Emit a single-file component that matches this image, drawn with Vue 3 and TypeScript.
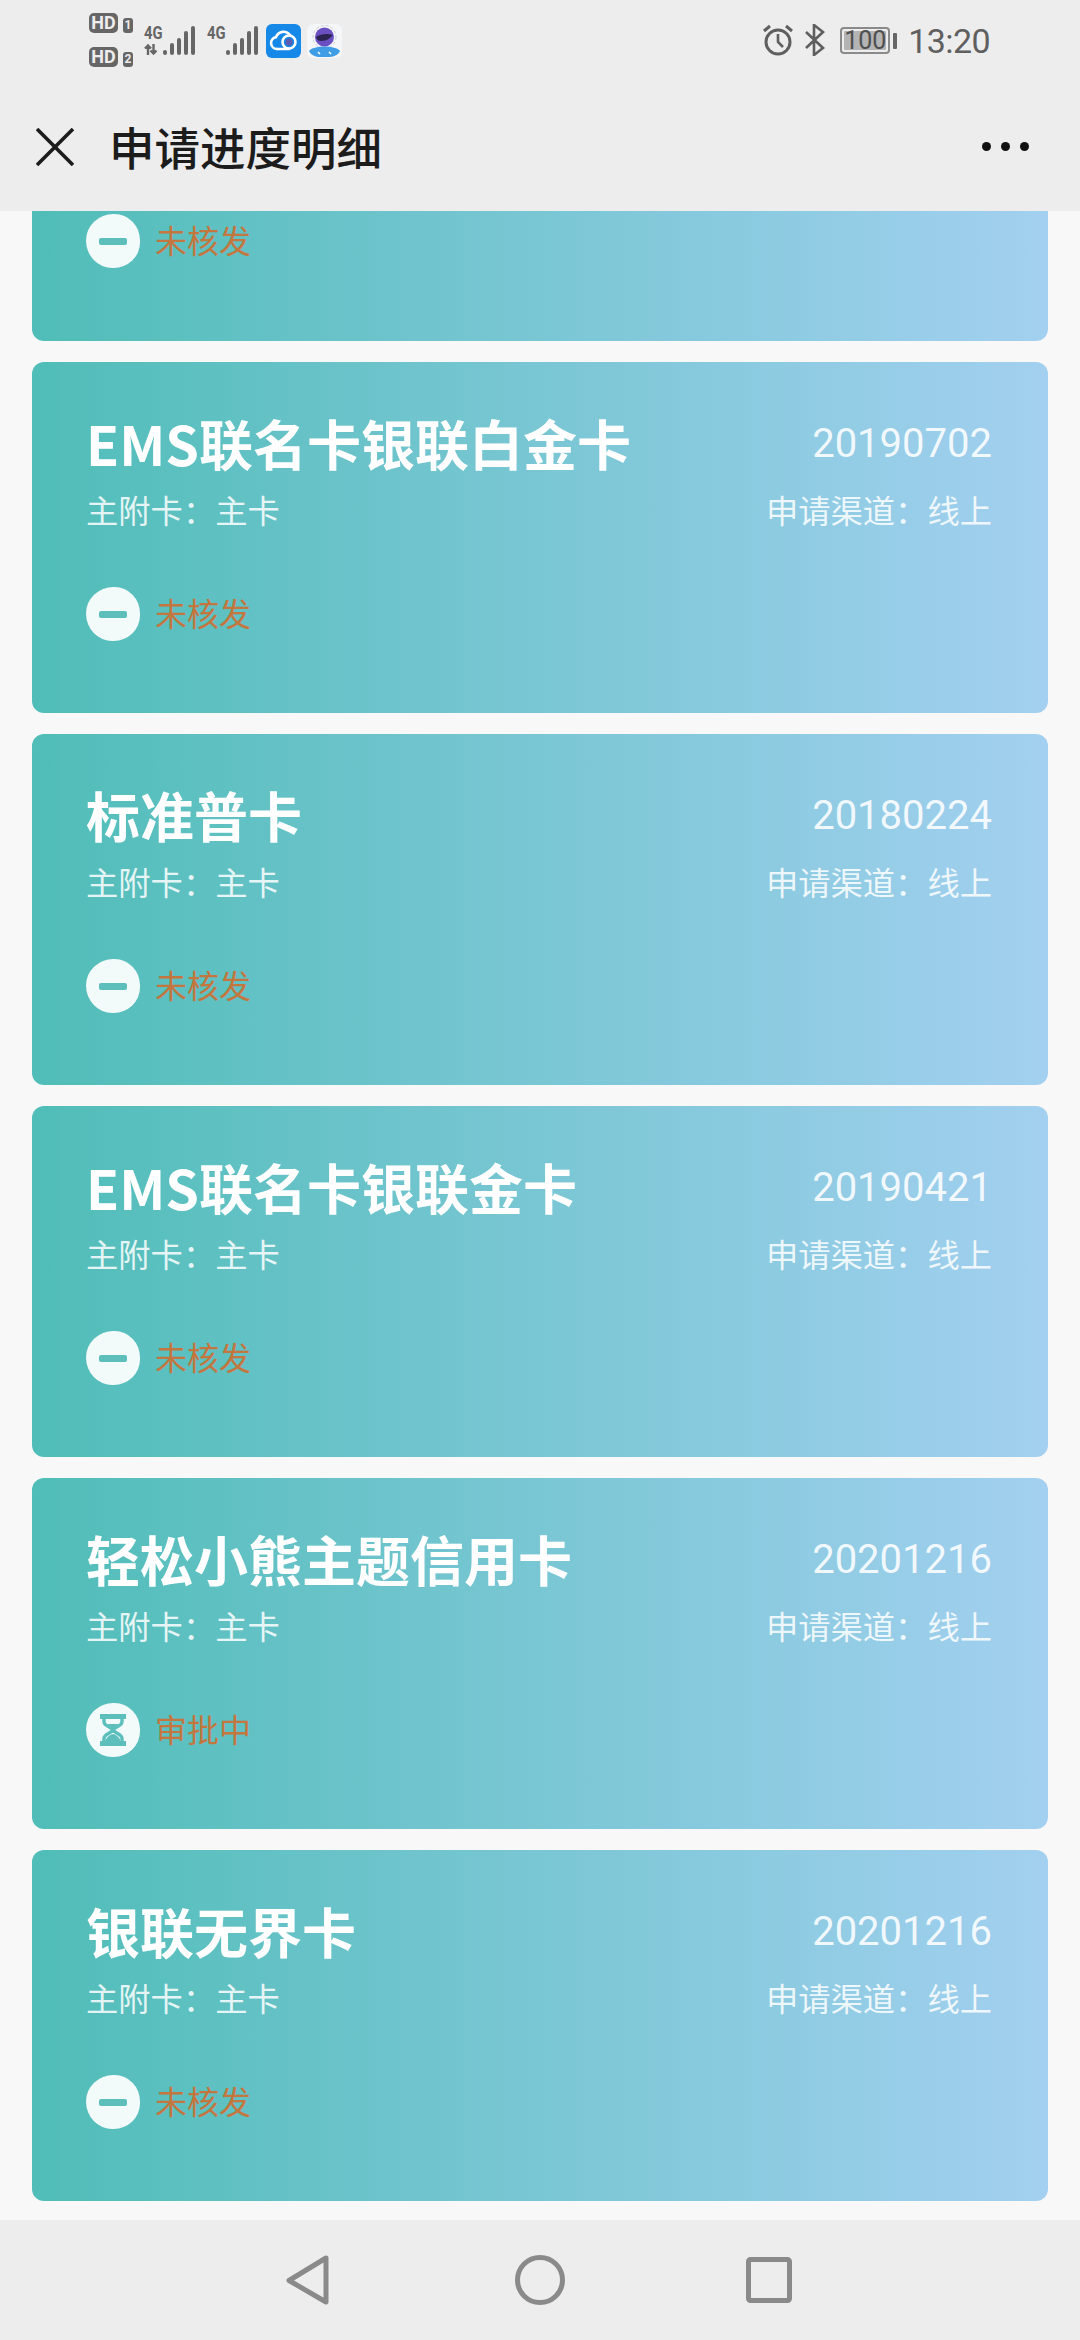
<script setup lang="ts">
interface CardItem {
  name: string
  date: string
  status: string
  pending: boolean
}
const cards: CardItem[] = [
  { name: 'EMS联名卡银联白金卡', date: '20190702', status: '未核发', pending: false },
  { name: '标准普卡', date: '20180224', status: '未核发', pending: false },
  { name: 'EMS联名卡银联金卡', date: '20190421', status: '未核发', pending: false },
  { name: '轻松小熊主题信用卡', date: '20201216', status: '审批中', pending: true },
  { name: '银联无界卡', date: '20201216', status: '未核发', pending: false },
]
const bars = [5, 12, 17, 24, 29]
</script>

<template>
  <div class="screen">
    <header class="top">
      <div class="status">
        <div class="hd-col">
          <div class="hd-row"><span class="hd">HD</span><span class="sim">1</span></div>
          <div class="hd-row"><span class="hd">HD</span><span class="sim">2</span></div>
        </div>
        <div class="net first">
          <div class="net-labels">
            <span>4G</span>
            <svg width="13" height="11" viewBox="0 0 13 11" fill="none" stroke="#666" stroke-width="2.400">
              <path d="M4 11V2M1 4.500L4 1.500L7 4.500M9.500 0v9M6.500 6.500L9.500 9.500L12.500 6.500" />
            </svg>
          </div>
          <div class="bars"><i v-for="h in bars" :key="h" :style="{ height: h + 'px' }"></i></div>
        </div>
        <div class="net second">
          <div class="net-labels"><span>4G</span></div>
          <div class="bars"><i v-for="h in bars" :key="h" :style="{ height: h + 'px' }"></i></div>
        </div>
        <svg class="app-icon cloud" width="35" height="34" viewBox="0 0 35 34">
          <rect width="35" height="34" rx="6" fill="#1588e8" />
          <path d="M11 25a6 6 0 0 1-1-11.900a8 8 0 0 1 14-2" fill="none" stroke="#fff" stroke-width="2.600" stroke-linecap="round" />
          <path d="M11 25h12" fill="none" stroke="#fff" stroke-width="2.600" stroke-linecap="round" />
          <circle cx="23" cy="18" r="6.500" fill="none" stroke="#fff" stroke-width="2.600" />
          <circle cx="23" cy="18" r="3.500" fill="#5b5bb0" />
        </svg>
        <svg class="app-icon avatar" width="35" height="34" viewBox="0 0 35 34">
          <rect width="35" height="34" rx="6" fill="#f4f6f8" />
          <circle cx="17.500" cy="13" r="11.500" fill="none" stroke="#c9cdd6" stroke-width="1" stroke-dasharray="3 2" />
          <path d="M2 27c4-6 27-6 31 0c-2 4-6 6-13 6h-6c-6 0-10-2-12-6z" fill="#3f9de6" />
          <circle cx="17.500" cy="13" r="9.500" fill="#6a4fc0" />
          <path d="M9 13c4-3 12-4 17-2c-3 3-6 6-12 6c-2 0-4-1-5-4z" fill="#2b2350" />
          <path d="M11 28l2 2M22 28l2 2" stroke="#fff" stroke-width="1.500" />
        </svg>
        <div class="spacer"></div>
        <svg class="alarm" width="32" height="32" viewBox="0 0 32 32" fill="none" stroke="#5f5f5f">
          <circle cx="16" cy="18" r="12" stroke-width="3" />
          <path d="M16 10v8l5 5" stroke-width="2.600" />
          <path d="M2 7l6-5M30 7l-6-5" stroke-width="3" />
        </svg>
        <svg class="bt" width="21" height="32" viewBox="0 0 21 32" fill="none" stroke="#5f5f5f" stroke-width="2.600">
          <path d="M2 8l17 16l-9 7V1l9 7L2 24" />
        </svg>
        <div class="battery">
          <div class="cell"><div class="fill"></div><span>100</span></div>
          <div class="tip"></div>
        </div>
        <span class="clock">13:20</span>
      </div>
      <div class="title-bar">
        <svg class="close" width="38" height="38" viewBox="0 0 38 38">
          <path d="M1 1l36 36M37 1L1 37" stroke="#1c1c1c" stroke-width="3.600" fill="none" />
        </svg>
        <h1>申请进度明细</h1>
        <div class="dots"><i></i><i></i><i></i></div>
      </div>
    </header>

    <main class="list">
      <section class="card card-tail">
        <div class="state">
          <span class="badge"><i class="minus"></i></span>
          <span class="state-text">未核发</span>
        </div>
      </section>
      <section v-for="c in cards" :key="c.name" class="card">
        <div class="row head">
          <span class="name">{{ c.name }}</span>
          <span class="date">{{ c.date }}</span>
        </div>
        <div class="row sub">
          <span>主附卡：主卡</span>
          <span>申请渠道：线上</span>
        </div>
        <div class="state">
          <span class="badge">
            <svg v-if="c.pending" width="28" height="32" viewBox="0 0 28 32" fill="none" stroke="#5cbfbc">
              <path d="M1 2.500h26M1 29.500h26" stroke-width="5" />
              <path d="M5 3v5c0 4 9 6 9 8s-9 4-9 8v5M23 3v5c0 4-9 6-9 8s9 4 9 8v5" stroke-width="3.400" />
              <path d="M8 10h12l-6 4zM6 28c1-5 6-8 8-8s7 3 8 8z" fill="#5cbfbc" stroke="none" />
            </svg>
            <i v-else class="minus"></i>
          </span>
          <span class="state-text">{{ c.status }}</span>
        </div>
      </section>
    </main>

    <nav class="nav">
      <svg width="44" height="50" viewBox="0 0 44 50" fill="none" stroke="#8a8a8a" stroke-width="5" stroke-linejoin="round">
        <path d="M40 3L3 25.500L40 47z" />
      </svg>
      <svg class="home" width="50" height="50" viewBox="0 0 50 50" fill="none" stroke="#8a8a8a" stroke-width="5">
        <circle cx="25" cy="25" r="22.500" />
      </svg>
      <svg width="46" height="46" viewBox="0 0 46 46" fill="none" stroke="#8a8a8a" stroke-width="5" stroke-linejoin="round">
        <rect x="2.500" y="2.500" width="41" height="41" rx="2" />
      </svg>
    </nav>
  </div>
</template>

<style>
html, body { margin: 0; padding: 0; background: #f8f8f8; }
</style>

<style scoped>
.screen {
  width: 1080px;
  height: 2340px;
  display: flex;
  flex-direction: column;
  background: #f8f8f8;
  overflow: hidden;
  font-family: "Noto Sans CJK SC", "Noto Sans", sans-serif;
}
.top { height: 211px; background: #ededed; flex: none; display: flex; flex-direction: column; }
.status {
  height: 70px;
  flex: none;
  display: flex;
  align-items: flex-start;
  padding: 0 90px 0 89px;
  box-sizing: border-box;
  color: #5f5f5f;
  font-family: Roboto, sans-serif;
}
.hd-col { display: flex; flex-direction: column; gap: 14px; padding-top: 13px; }
.hd-row { display: flex; align-items: flex-end; gap: 5px; height: 20px; }
.hd {
  width: 29px;
  height: 20px;
  border-radius: 5px;
  background: #666;
  color: #ededed;
  font: 700 18px/20px Roboto, sans-serif;
  text-align: center;
}
.sim {
  width: 10px;
  height: 15px;
  border-radius: 3px;
  background: #666;
  color: #ededed;
  font: 700 12px/15px Roboto, sans-serif;
  text-align: center;
}
.net { display: flex; align-items: flex-end; height: 30px; margin-top: 25px; }
.net.first { margin-left: 11px; }
.net.second { margin-left: 12px; }
.net-labels {
  display: flex;
  flex-direction: column;
  gap: 4px;
  align-self: flex-start;
  width: 19px;
  font: 700 18px/15px Roboto, sans-serif;
  color: #666;
}
.net-labels span { display: block; width: 19px; white-space: nowrap; transform: scaleX(.82); transform-origin: left; }
.bars { display: flex; align-items: flex-end; gap: 3px; height: 30px; }
.bars i { width: 4px; background: #666; border-radius: 2px; display: block; }
.app-icon { margin-top: 24px; flex: none; }
.cloud { margin-left: 8px; }
.avatar { margin-left: 6px; }
.spacer { flex: 1; }
.alarm { margin-top: 24px; flex: none; }
.bt { margin: 24px 0 0 10px; flex: none; }
.battery { display: flex; align-items: center; margin: 27px 0 0 15px; height: 27px; gap: 3px; }
.cell {
  position: relative;
  width: 50px;
  height: 27px;
  box-sizing: border-box;
  border: 2px solid #8a8a8a;
  border-radius: 4px;
  text-align: center;
  font: 400 25px/23px Roboto, sans-serif;
  color: #4f4f4f;
}
.cell span { position: relative; }
.fill { position: absolute; left: 2px; top: 2px; bottom: 2px; right: 2px; background: #b4b4b4; border-radius: 1px; }
.tip { width: 4px; height: 16px; background: #666; border-radius: 1px; }
.clock { font-size: 34px; line-height: 42px; margin: 20px 0 0 11px; letter-spacing: -.6px; }
.title-bar { flex: 1; display: flex; align-items: center; padding: 16px 51px 0 36px; }
.close { flex: none; margin-top: -4px; }
.title-bar h1 {
  margin: -6px 0 0 35px;
  font-size: 45.500px;
  line-height: 60px;
  font-weight: 500;
  color: #1c1c1c;
  flex: 1;
}
.dots { display: flex; gap: 10px; margin-top: -4px; }
.dots i { width: 9px; height: 9px; border-radius: 50%; background: #111; display: block; }
.list {
  flex: 1;
  min-height: 0;
  padding: 0 32px;
  display: flex;
  flex-direction: column;
  gap: 21px;
}
.card {
  flex: none;
  height: 351px;
  box-sizing: border-box;
  padding: 48px 56px 0 54px;
  border-radius: 12px;
  background: linear-gradient(90deg, #50bdb8 0%, #a3d0f0 100%);
  color: #fff;
}
.card-tail { height: 130px; padding-top: 3px; border-radius: 0 0 12px 12px; }
.row { display: flex; justify-content: space-between; align-items: center; }
.head { height: 66px; }
.name { font-size: 54px; line-height: 66px; font-weight: 700; }
.date { font: 400 40px/60px Roboto, sans-serif; color: rgba(255, 255, 255, .88); margin-top: 1px; }
.sub {
  height: 44px;
  margin-top: 11px;
  font-size: 32.300px;
  line-height: 44px;
  color: rgba(255, 255, 255, .85);
}
.sub + .state { margin-top: 56px; }
.state { display: flex; align-items: center; height: 54px; gap: 15px; }
.badge {
  width: 54px;
  height: 54px;
  background: #f3fafa;
  border-radius: 52% 48% 50% 50% / 50% 50% 48% 52%;
  display: flex;
  align-items: center;
  justify-content: center;
  flex: none;
}
.minus { width: 28px; height: 7px; border-radius: 2px; background: #5cbfbc; display: block; }
.state-text { font-size: 32px; line-height: 44px; color: #c4763f; margin-top: -5px; }
.nav {
  flex: none;
  height: 120px;
  background: #ededed;
  display: flex;
  align-items: center;
  padding: 0 288px 0 286px;
  justify-content: space-between;
}
.home { margin-left: 4px; }
</style>
